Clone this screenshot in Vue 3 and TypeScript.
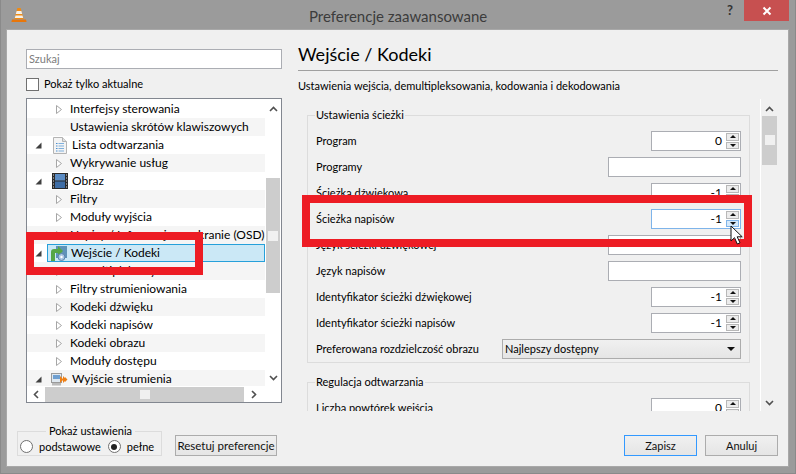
<script setup lang="ts">
type Row = { label: string; level: 0 | 1; icon?: string; arrow: boolean; selected?: boolean };
const tree: Row[] = [
  { label: 'Interfejsy sterowania', level: 1, arrow: true },
  { label: 'Ustawienia skrótów klawiszowych', level: 1, arrow: false },
  { label: 'Lista odtwarzania', level: 0, icon: 'doc', arrow: true },
  { label: 'Wykrywanie usług', level: 1, arrow: true },
  { label: 'Obraz', level: 0, icon: 'film', arrow: true },
  { label: 'Filtry', level: 1, arrow: true },
  { label: 'Moduły wyjścia', level: 1, arrow: true },
  { label: 'Napisy / Informacje na ekranie (OSD)', level: 1, arrow: true },
  { label: 'Wejście / Kodeki', level: 0, icon: 'input', arrow: true, selected: true },
  { label: 'Demultipleksery', level: 1, arrow: true },
  { label: 'Filtry strumieniowania', level: 1, arrow: true },
  { label: 'Kodeki dźwięku', level: 1, arrow: true },
  { label: 'Kodeki napisów', level: 1, arrow: true },
  { label: 'Kodeki obrazu', level: 1, arrow: true },
  { label: 'Moduły dostępu', level: 1, arrow: true },
  { label: 'Wyjście strumienia', level: 0, icon: 'output', arrow: true },
];
type Field = { label: string; kind: 'spin' | 'text' | 'combo'; value?: string; focus?: boolean };
const fields: Field[] = [
  { label: 'Program', kind: 'spin', value: '0' },
  { label: 'Programy', kind: 'text' },
  { label: 'Ścieżka dźwiękowa', kind: 'spin', value: '-1' },
  { label: 'Ścieżka napisów', kind: 'spin', value: '-1', focus: true },
  { label: 'Język ścieżki dźwiękowej', kind: 'text' },
  { label: 'Język napisów', kind: 'text' },
  { label: 'Identyfikator ścieżki dźwiękowej', kind: 'spin', value: '-1' },
  { label: 'Identyfikator ścieżki napisów', kind: 'spin', value: '-1' },
  { label: 'Preferowana rozdzielczość obrazu', kind: 'combo', value: 'Najlepszy dostępny' },
];
</script>

<template>
  <div class="frame">
    <header class="titlebar">
      <svg class="cone" width="16" height="16" viewBox="0 0 16 16">
        <path d="M6.400 1h3.200l3 11H3.400z" fill="#f08a12" />
        <path d="M5.600 4h4.800l.8 3H4.800z" fill="#f4f0e8" />
        <path d="M4.500 8.500h7l.7 2.500H3.800z" fill="#f4f0e8" />
        <path d="M1 12.500h14l.6 2.500H.4z" fill="#e8760a" />
      </svg>
      <span class="title">Preferencje zaawansowane</span>
      <span class="help">?</span>
      <span class="close">
        <svg width="10" height="10" viewBox="0 0 10 10"><path d="M1.500 1.500l7 7m0-7l-7 7" stroke="#fff" stroke-width="2" /></svg>
      </span>
    </header>

    <main class="window">
      <section class="panes">
        <aside class="left">
          <div class="search">Szukaj</div>
          <label class="check"><span class="box"></span>Pokaż tylko aktualne</label>
          <div class="tree">
            <div class="tree-main">
              <ul class="rows">
                <li v-for="(r, i) in tree" :key="r.label" class="row" :class="{ alt: i % 2 === 1, sel: r.selected }">
                  <template v-if="r.level === 0">
                    <svg class="tw" width="7" height="7" viewBox="0 0 7 7"><path d="M6.500.5v6H.5z" fill="#404040" /></svg>
                    <span class="ico">
                      <svg v-if="r.icon === 'doc'" width="14" height="17" viewBox="0 0 14 17">
                        <path d="M.5.5h9l4 4v12H.5z" fill="#f4f4f4" stroke="#b4b4b4" />
                        <path d="M9.500.5v4h4" fill="#e0e0e0" stroke="#b4b4b4" />
                        <path d="M3 6.500h1.500M3 9h1.500M3 11.500h1.500M3 14h1.500" stroke="#4a8fd0" />
                        <path d="M5.500 6.500H11M5.500 9H11M5.500 11.500H11M5.500 14H11" stroke="#7fb0dd" />
                      </svg>
                      <svg v-else-if="r.icon === 'film'" width="16" height="16" viewBox="0 0 16 16">
                        <rect width="16" height="16" fill="#2b2b2b" />
                        <rect x="3" y="1" width="10" height="6.500" fill="#5b8cc4" />
                        <rect x="3" y="8.500" width="10" height="6.500" fill="#3f6ea6" />
                        <path d="M1 2h1M1 5h1M1 8h1M1 11h1M1 14h1M14 2h1M14 5h1M14 8h1M14 11h1M14 14h1" stroke="#ddd" />
                      </svg>
                      <svg v-else-if="r.icon === 'input'" width="17" height="17" viewBox="0 0 17 17">
                        <rect x="6" y="1" width="11" height="12" fill="#5f93b8" />
                        <path d="M1 16V7c0-2 1-3 3-3h4V1l5 5-5 5V8H5v8z" fill="#56a646" />
                        <circle cx="11.500" cy="12" r="3.500" fill="#a9c6e2" stroke="#5a84ad" />
                        <circle cx="11.500" cy="12" r="1.200" fill="#fff" />
                      </svg>
                      <svg v-else width="17" height="13" viewBox="0 0 17 13">
                        <rect x=".5" y=".5" width="10" height="9" fill="#dfe8f0" stroke="#9a9a9a" />
                        <rect x="2" y="2" width="7" height="4" fill="#6f9fd0" />
                        <rect x="1" y="10" width="9" height="2.500" fill="#bbb" />
                        <path d="M9 3l3.500 3.500L9 10zM12 3l3.500 3.500L12 10zM14 4l2.500 2.500L14 9z" fill="#ee7f14" />
                      </svg>
                    </span>
                  </template>
                  <svg v-else-if="r.arrow" class="exp" width="6" height="9" viewBox="0 0 6 9"><path d="M.5.5l5 4-5 4z" fill="#fff" stroke="#a6a6a6" /></svg>
                  <span v-else class="exp-gap"></span>
                  <span class="lbl" :class="{ l0: r.level === 0 }">{{ r.label }}</span>
                </li>
              </ul>
              <div class="vbar">
                <svg class="chev" width="9" height="6" viewBox="0 0 9 6"><path d="M1 5l3.500-3.500L8 5" fill="none" stroke="#505050" stroke-width="1.600" /></svg>
                <div class="vtrack"><div class="vthumb"><i class="grip"></i></div></div>
                <svg class="chev" width="9" height="6" viewBox="0 0 9 6"><path d="M1 1l3.500 3.500L8 1" fill="none" stroke="#505050" stroke-width="1.600" /></svg>
              </div>
            </div>
            <div class="hbar">
              <svg width="6" height="9" viewBox="0 0 6 9"><path d="M5 1L1.500 4.500 5 8" fill="none" stroke="#505050" stroke-width="1.600" /></svg>
              <div class="hthumb"><i class="grip"></i></div>
              <svg width="6" height="9" viewBox="0 0 6 9"><path d="M1 1l3.500 3.500L1 8" fill="none" stroke="#505050" stroke-width="1.600" /></svg>
            </div>
          </div>
        </aside>

        <div class="right">
          <h1 class="heading">Wejście / Kodeki</h1>
          <p class="desc">Ustawienia wejścia, demultipleksowania, kodowania i dekodowania</p>
          <div class="scroller">
            <div class="viewport">
              <fieldset class="group first">
                <legend>Ustawienia ścieżki</legend>
                <div v-for="f in fields" :key="f.label" class="field">
                  <span>{{ f.label }}</span>
                  <div v-if="f.kind === 'spin'" class="spin" :class="{ focus: f.focus }">
                    <span class="val">{{ f.value }}</span>
                    <span class="btns">
                      <b class="up"><i></i></b>
                      <b class="down"><i></i></b>
                    </span>
                  </div>
                  <div v-else-if="f.kind === 'text'" class="input"></div>
                  <div v-else class="combo">{{ f.value }}<i></i></div>
                </div>
              </fieldset>
              <fieldset class="group">
                <legend>Regulacja odtwarzania</legend>
                <div class="field">
                  <span>Liczba powtórek wejścia</span>
                  <div class="spin"><span class="val">0</span><span class="btns"><b class="up"><i></i></b><b class="down"><i></i></b></span></div>
                </div>
              </fieldset>
            </div>
            <div class="vbar2">
              <svg class="chev" width="9" height="6" viewBox="0 0 9 6"><path d="M1 5l3.500-3.500L8 5" fill="none" stroke="#505050" stroke-width="1.600" /></svg>
              <div class="vtrack2"><div class="vthumb2"><i class="grip"></i></div></div>
              <svg class="chev" width="9" height="6" viewBox="0 0 9 6"><path d="M1 1l3.500 3.500L8 1" fill="none" stroke="#505050" stroke-width="1.600" /></svg>
            </div>
          </div>
        </div>
      </section>

      <footer class="foot">
        <fieldset class="mode">
          <legend>Pokaż ustawienia</legend>
          <span class="radio"></span><span class="rl">podstawowe</span>
          <span class="radio on"></span><span>pełne</span>
        </fieldset>
        <button class="btn reset">Resetuj preferencje</button>
        <span class="spacer"></span>
        <button class="btn primary">Zapisz</button>
        <button class="btn">Anuluj</button>
      </footer>

      <div class="mark mark-a"></div>
      <div class="mark mark-b"></div>
      <svg class="cursor" width="17" height="21" viewBox="0 0 17 21">
        <path d="M1 1v15l3.500-3.300 2.800 6.300 2.700-1.200-2.800-6h5z" fill="#fff" stroke="#111" stroke-width="1" />
      </svg>
    </main>
  </div>
</template>

<style>
html, body { margin: 0; background: #9b9b9b; }
</style>

<style scoped>
.frame {
  width: 796px; height: 474px; box-sizing: border-box; background: #9b9b9b;
  display: flex; flex-direction: column; overflow: hidden;
  font: 11px/16px Lato, sans-serif; color: #000;
  border: 1px solid #8a8a8a; border-width: 0 1px 1px 1px;
}
.titlebar { height: 30px; flex: none; display: flex; align-items: flex-start; position: relative; padding-left: 10px; }
.cone { margin-top: 7px; }
.title { margin: 6px 0 0 282px; font-size: 15px; line-height: 20px; color: #3c3c3c; }
.help { position: absolute; left: 726px; top: 2px; font-weight: 700; font-size: 13px; color: #333; }
.close { position: absolute; left: 743px; top: 0; width: 45px; height: 21px; background: #c75050; display: flex; align-items: center; justify-content: center; }
.window { position: relative; flex: 1; margin: 0 7px 7px 6px; background: #f0f0f0; outline: 1px solid #a8a8a8; display: flex; flex-direction: column; }
.panes { display: flex; flex: none; height: 381px; }
.left { width: 256px; margin: 19px 0 0 19px; flex: none; display: flex; flex-direction: column; }
.search { height: 20px; box-sizing: border-box; border: 1px solid #abadb3; background: #fff; color: #7c7c7c; padding: 1px 2px; line-height: 16px; }
.check { display: flex; align-items: center; margin-top: 8px; height: 14px; }
.box { width: 11px; height: 11px; border: 1px solid #707070; background: #fff; margin-right: 5px; }
.tree { margin-top: 7px; height: 305px; box-sizing: border-box; border: 1px solid #828790; background: #fff; display: flex; flex-direction: column; font-size: 12px; }
.tree-main { display: flex; flex: 1; min-height: 0; }
.rows { list-style: none; margin: 1px 0 0; padding: 0; width: 238px; flex: none; overflow: hidden; }
.row { height: 18px; display: flex; align-items: center; box-sizing: border-box; padding-left: 8px; white-space: nowrap; }
.row.alt { background: #f5f5f5; }
.row.sel { background: #cbe8f6; box-shadow: inset 0 0 0 1px #26a0da; margin-left: 20px; padding-left: 0; position: relative; }
.tw { margin-right: 9px; flex: none; }
.sel .tw { position: absolute; left: -12px; }
.ico { width: 17px; display: flex; justify-content: center; align-items: center; flex: none; margin-right: 4px; }
.sel .ico { margin-left: 3px; }
.exp { margin-left: 21px; margin-right: 8px; flex: none; }
.exp-gap { width: 35px; flex: none; }
.vbar { flex: 1; background: #fff; display: flex; flex-direction: column; align-items: center; padding: 7px 0 5px; }
.chev { flex: none; }
.vtrack { flex: 1; align-self: stretch; padding: 0 1px 0 1px; margin: 2px 0 0; }
.vthumb { margin: 64px 0 0; height: 115px; background: #cdcdcd; display: flex; justify-content: center; padding-top: 0; }
.grip { display: block; width: 10px; height: 10px; background: #f0f0f0; }
.vthumb .grip { margin-top: 53px; }
.hbar { height: 16px; flex: none; display: flex; align-items: center; padding: 0 5px 0 6px; background: #fff; gap: 0; margin-bottom: 0; }
.hthumb { width: 199px; height: 15px; background: #cdcdcd; margin: 0 7px 0 6px; display: flex; align-items: center; justify-content: center; }
.hthumb .grip { height: 9px; margin-left: 0; }
.right { flex: 1; margin: 0 10px 0 16px; min-width: 0; display: flex; flex-direction: column; }
.heading { margin: 0; height: 41px; box-sizing: border-box; padding-top: 12px; font-size: 18px; line-height: 24px; font-weight: 400; color: #000; border-bottom: 1px solid #a0a0a0; }
.desc { margin: 7px 0 0; height: 16px; white-space: nowrap; }
.scroller { margin-top: 5px; height: 312px; flex: none; display: flex; }
.viewport { width: 462px; flex: none; overflow: hidden; border-right: 1px solid #fff; box-sizing: content-box; }
.group { margin: 9px 10px 0 9px; padding: 9px 8px 10px 8px; border: 1px solid #dcdcdc; display: flex; flex-direction: column; gap: 6px; min-inline-size: 0; }
.group + .group { margin-top: 12px; }
legend { padding: 0 1px; margin-left: -1px; line-height: 14px; }
.group.first { height: 255px; box-sizing: border-box; }
.field { height: 20px; flex: none; display: flex; align-items: center; justify-content: space-between; white-space: nowrap; }
.spin { position: relative; flex: none; width: 90px; height: 20px; box-sizing: border-box; border: 1px solid #abadb3; background: #fff; display: flex; justify-content: flex-end; align-items: center; font-size: 12px; }
.spin.focus { border-color: #7eb4ea; }
.val { margin-right: 18px; }
.btns { position: absolute; right: 1px; top: 1px; width: 13px; height: 16px; display: flex; flex-direction: column; gap: 1px; }
.btns b { flex: 1; box-sizing: border-box; border: 1px solid #b8b8b8; background: #ececec; display: flex; align-items: center; justify-content: center; }
.btns i { width: 0; height: 0; border-left: 3px solid transparent; border-right: 3px solid transparent; }
.up i { border-bottom: 3px solid #111; }
.down i { border-top: 3px solid #111; }
.focus .down { background: #d5e9fa; border-color: #7eb4ea; }
.input { flex: none; width: 133px; height: 20px; box-sizing: border-box; border: 1px solid #abadb3; background: #fff; }
.combo { flex: none; width: 239px; height: 20px; box-sizing: border-box; border: 1px solid #acacac; background: linear-gradient(#f0f0f0, #e5e5e5); padding-left: 2px; display: flex; align-items: center; justify-content: space-between; padding-right: 5px; }
.combo i { width: 0; height: 0; border-left: 4px solid transparent; border-right: 4px solid transparent; border-top: 4px solid #111; }
.vbar2 { flex: 1; background: #f0f0f0; display: flex; flex-direction: column; align-items: center; padding: 7px 0 5px; }
.vtrack2 { flex: 1; align-self: stretch; padding: 4px 1px 0; }
.vthumb2 { height: 49px; background: #cdcdcd; display: flex; justify-content: center; }
.vthumb2 .grip { margin-top: 19px; }
.foot { flex: 1; display: flex; align-items: flex-start; position: relative; padding: 0 10px 0 10px; }
.mode { margin: 13px 0 0; width: 145px; min-inline-size: 0; flex: none; height: 32px; box-sizing: border-box; padding: 0 0 0 2px; border: 1px solid #dcdcdc; display: flex; align-items: center; }
.mode legend { margin: 0 auto; padding: 0 3px; }
.radio { width: 13px; height: 13px; box-sizing: border-box; border: 1px solid #707070; border-radius: 50%; background: #fff; margin-right: 6px; position: relative; flex: none; }
.radio.on::after { content: ""; position: absolute; left: 2.500px; top: 2.500px; width: 6px; height: 6px; border-radius: 50%; background: #222; }
.rl { margin-right: 7px; }
.btn { height: 21px; width: 73px; margin: 24px 0 0 8px; padding: 0; border: 1px solid #acacac; background: linear-gradient(#f0f0f0, #e5e5e5); font: inherit; color: #111; white-space: nowrap; flex: none; }
.reset { width: 102px; margin-left: 13px; font-size: 11.500px; }
.primary { border-color: #3399ff; }
.spacer { flex: 1; }
.mark { position: absolute; border: 8px solid #ed1c24; box-sizing: border-box; pointer-events: none; }
.mark-a { left: 19px; top: 202px; width: 177px; height: 43px; }
.mark-b { left: 295px; top: 165px; width: 450px; height: 52px; }
.cursor { position: absolute; left: 723px; top: 195px; }
</style>
